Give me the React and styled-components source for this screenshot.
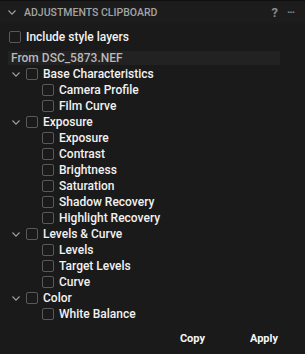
import React from "react";
import styled, { createGlobalStyle } from "styled-components";

const Global = createGlobalStyle`
  html, body { margin: 0; padding: 0; background: #1a1a1a; }
  body { font-family: Roboto, "Liberation Sans", sans-serif; }
`;

const Panel = styled.div`
  width: 305px;
  height: 354px;
  background: #1a1a1a;
  display: flex;
  flex-direction: column;
  box-sizing: border-box;
  overflow: hidden;
`;

const Header = styled.div`
  height: 23px;
  box-sizing: border-box;
  border-top: 1px solid #0f0f0f;
  background: #1c1c1c;
  display: flex;
  align-items: center;
  padding: 0 11px 0 8px;
  gap: 8px;
`;

const Title = styled.div`
  flex: 1;
  color: #a4a4a4;
  font-size: 10.5px;
  font-weight: 500;
  text-transform: uppercase;
`;

const HeaderIcons = styled.div`
  display: flex;
  align-items: center;
  gap: 9px;
  color: #8a8a8a;
  font-weight: 700;
`;

const Help = styled.span`
  font-size: 13px;
  line-height: 1;
`;

const More = styled.span`
  font-size: 11px;
  letter-spacing: -1px;
`;

const Body = styled.div`
  display: flex;
  flex-direction: column;
  padding: 7px 0 0 0;
`;

const Row = styled.div`
  height: 16px;
  display: flex;
  align-items: center;
  padding-left: ${(p) => p.$indent}px;
  color: #f2f2f2;
  font-size: 12px;
  font-weight: 500;
  white-space: nowrap;
`;

const Box = styled.span`
  width: 10px;
  height: 10px;
  border: 1px solid #595959;
  border-radius: 2px;
  box-sizing: content-box;
  margin-right: ${(p) => p.$gap}px;
  flex: none;
`;

const Chevron = styled.svg`
  width: 8px;
  height: 5px;
  margin-right: ${(p) => p.$gap}px;
  flex: none;
`;

const IncludeRow = styled(Row)`
  height: 14px;
  margin-bottom: 7px;
`;

const SourceBar = styled.div`
  margin: 0 25px 1px 8px;
  height: 14px;
  background: #222222;
  color: #b9b9b9;
  font-size: 12px;
  font-weight: 500;
  display: flex;
  align-items: center;
  padding-left: 3px;
`;

const Footer = styled.div`
  display: flex;
  justify-content: flex-end;
  gap: 45px;
  padding: 10px 27px 0 0;
`;

const Btn = styled.button`
  background: none;
  border: none;
  padding: 0;
  color: #f4f4f4;
  font-family: Roboto, "Liberation Sans", sans-serif;
  font-size: 11px;
  font-weight: 700;
`;

const Chev = ({ gap }) => (
  <Chevron $gap={gap} viewBox="0 0 8 5">
    <polyline points="0.5,0.5 4,4.2 7.5,0.5" fill="none" stroke="#a0a0a0" strokeWidth="1.1" />
  </Chevron>
);

const groups = [
  { name: "Base Characteristics", items: ["Camera Profile", "Film Curve"] },
  {
    name: "Exposure",
    items: ["Exposure", "Contrast", "Brightness", "Saturation", "Shadow Recovery", "Highlight Recovery"],
  },
  { name: "Levels & Curve", items: ["Levels", "Target Levels", "Curve"] },
  { name: "Color", items: ["White Balance"] },
];

export default function App() {
  return (
    <>
      <Global />
      <Panel>
        <Header>
          <Chev gap={0} />
          <Title>Adjustments Clipboard</Title>
          <HeaderIcons>
            <Help>?</Help>
            <More>···</More>
          </HeaderIcons>
        </Header>
        <Body>
          <IncludeRow $indent={9}>
            <Box $gap={5} />
            Include style layers
          </IncludeRow>
          <SourceBar>From DSC_5873.NEF</SourceBar>
          {groups.map((g) => (
            <React.Fragment key={g.name}>
              <Row $indent={12}>
                <Chev gap={6} />
                <Box $gap={5} />
                {g.name}
              </Row>
              {g.items.map((it) => (
                <Row key={it} $indent={42}>
                  <Box $gap={5} />
                  {it}
                </Row>
              ))}
            </React.Fragment>
          ))}
          <Footer>
            <Btn>Copy</Btn>
            <Btn>Apply</Btn>
          </Footer>
        </Body>
      </Panel>
    </>
  );
}
